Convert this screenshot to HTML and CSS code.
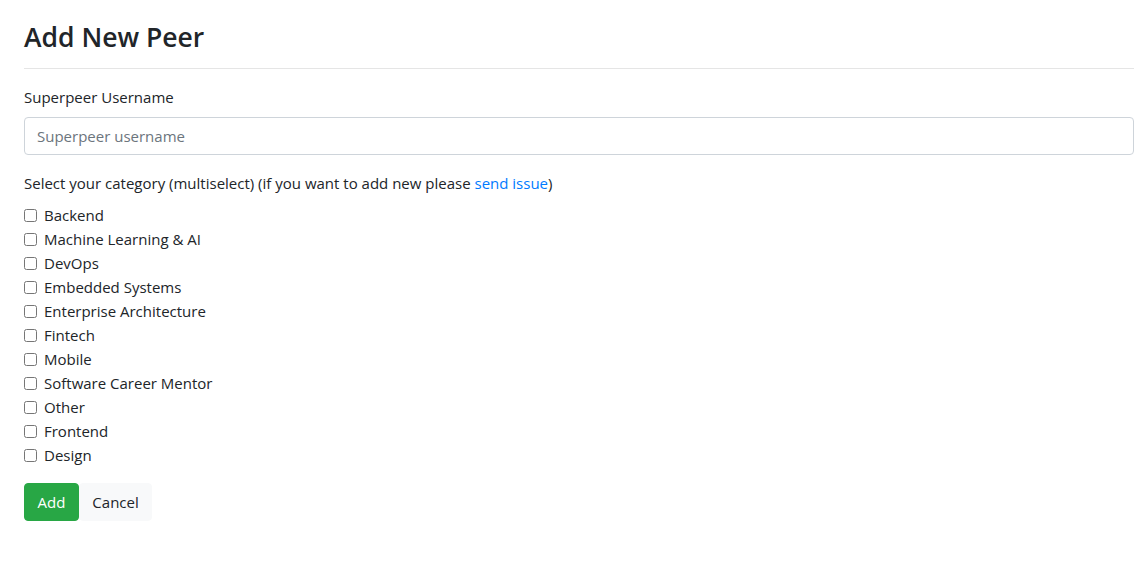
FILE: index.html
```html
<!DOCTYPE html>
<html>
<head>
    <title>Add New Peer</title>
    <link rel="stylesheet" href="styles.css">
</head>
<body>
    <div class="container">
        <h3>Add New Peer</h3>
        <hr>
        <form>
            <div class="form-group">
                <label for="username">Superpeer Username</label>
                <input type="text" id="username" class="form-control" placeholder="Superpeer username">
            </div>
            <div class="form-group">
                <label>Select your category (multiselect) (if you want to add new please <a href="#">send issue</a>)</label>
                <div class="form-check"><input type="checkbox" id="c1"><label for="c1">Backend</label></div>
                <div class="form-check"><input type="checkbox" id="c2"><label for="c2">Machine Learning &amp; AI</label></div>
                <div class="form-check"><input type="checkbox" id="c3"><label for="c3">DevOps</label></div>
                <div class="form-check"><input type="checkbox" id="c4"><label for="c4">Embedded Systems</label></div>
                <div class="form-check"><input type="checkbox" id="c5"><label for="c5">Enterprise Architecture</label></div>
                <div class="form-check"><input type="checkbox" id="c6"><label for="c6">Fintech</label></div>
                <div class="form-check"><input type="checkbox" id="c7"><label for="c7">Mobile</label></div>
                <div class="form-check"><input type="checkbox" id="c8"><label for="c8">Software Career Mentor</label></div>
                <div class="form-check"><input type="checkbox" id="c9"><label for="c9">Other</label></div>
                <div class="form-check"><input type="checkbox" id="c10"><label for="c10">Frontend</label></div>
                <div class="form-check"><input type="checkbox" id="c11"><label for="c11">Design</label></div>
            </div>
            <div class="button-group">
                <button type="submit" class="btn btn-success">Add</button>
                <button type="button" class="btn btn-light">Cancel</button>
            </div>
        </form>
    </div>
</body>
</html>
```

FILE: styles.css
```css
body {
    margin: 0;
    font-family: 'Open Sans', 'Noto Sans', sans-serif;
    font-size: 15px;
    line-height: 24px;
    color: #212529;
    background-color: #fff;
}
.container {
    padding: 20px 10px 0 24px;
}
h3 {
    margin: 0 0 14px;
    font-size: 26.5px;
    font-weight: 600;
    line-height: 34px;
}
hr {
    margin: 0 0 16px;
    border: 0;
    border-top: 1px solid rgba(0,0,0,0.1);
}
.form-group {
    margin-bottom: 16px;
}
.form-group > label {
    display: block;
    margin-bottom: 8px;
}
a {
    color: #007bff;
    text-decoration: none;
}
.form-control {
    display: block;
    width: 100%;
    height: 38px;
    padding: 6px 12px;
    font-family: inherit;
    font-size: 15px;
    color: #495057;
    border: 1px solid #ced4da;
    border-radius: 4px;
    box-sizing: border-box;
}
.form-control::placeholder {
    color: #6c757d;
}
.form-check {
    display: flex;
    align-items: center;
    height: 24px;
}
.form-check input {
    width: 13px;
    height: 13px;
    margin: 0 7px 0 0;
}
.button-group {
    display: flex;
}
.btn {
    height: 38px;
    padding: 6px 12.5px;
    font-family: inherit;
    font-size: 15px;
    border: 1px solid transparent;
    border-radius: 4px;
    cursor: pointer;
}
.btn-success {
    background-color: #28a745;
    border-color: #28a745;
    color: #fff;
}
.btn-light {
    background-color: #f8f9fa;
    border-color: #f8f9fa;
    color: #212529;
}
```
